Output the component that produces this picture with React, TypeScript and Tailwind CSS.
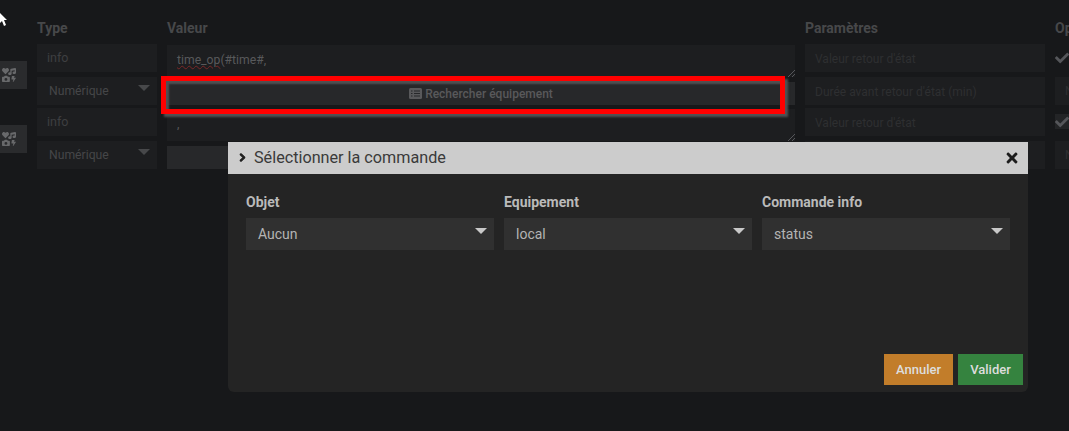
import { FC } from 'react';
import { FaCheck, FaChevronRight, FaIcons, FaTimes } from 'react-icons/fa';

const Caret: FC<{ className: string }> = ({ className }) => (
  <svg className={`absolute ${className}`} width="12" height="6" viewBox="0 0 12 6" fill="currentColor">
    <path d="M0 0h12L6 6z" />
  </svg>
);

const ResizeHandle = () => (
  <svg className="absolute right-0 bottom-0 text-[#55565a]" width="8" height="8" viewBox="0 0 8 8" stroke="currentColor" fill="none">
    <path d="M1 8l7-7M5 8l3-3" />
  </svg>
);

const ListIcon = () => (
  <svg width="13" height="11" viewBox="0 0 13 11">
    <rect width="13" height="11" rx="1.5" fill="#59595b" />
    <path d="M2 3h1.5M5 3h6M2 5.5h1.5M5 5.5h6M2 8h1.5M5 8h6" stroke="#27282a" strokeWidth="1" />
  </svg>
);

const SelectBox: FC<{ label: string }> = ({ label }) => (
  <div className="relative flex h-[28px] items-center bg-[#1d1e20] pt-[1px] pl-[12px] text-[12.2px] text-[#454648]">
    {label}
    <Caret className="top-[8px] right-[7px] text-[#47484a]" />
  </div>
);

const InputBox: FC<{ label: string; faint?: boolean }> = ({ label, faint }) => (
  <div className={`flex h-[28px] items-center bg-[#1d1e20] pt-[1px] pl-[10px] ${faint ? 'text-[12px] text-[#2e2f31]' : 'text-[12.5px] text-[#3e3f41]'}`}>
    {label}
  </div>
);

const IconButton = () => (
  <div className="-ml-[4px] flex h-[28px] w-[31px] items-center bg-[#2a2b2d] pl-[6px] text-[#68696b]">
    <FaIcons size={14} />
  </div>
);

const TableRow: FC<{ value: string; typo?: boolean; withButton?: boolean; checkBg?: boolean }> = ({ value, typo, withButton, checkBg }) => (
  <div className="grid grid-cols-[27px_120px_628px_240px_1fr] gap-x-[10px]">
    <div className="flex items-center">
      <IconButton />
    </div>
    <div className="flex flex-col gap-[5px]">
      <InputBox label="info" />
      <SelectBox label="Numérique" />
    </div>
    <div className="flex flex-col gap-[5px] pt-[1px]">
      <div className="relative h-[32px] bg-[#1d1e20] pt-[6px] pl-[10px] text-[12.2px] text-[#58595b]">
        {typo ? (
          <>
            <span className="underline decoration-[#7a2626] decoration-wavy decoration-1">time_op</span>(#time#,
          </>
        ) : (
          value
        )}
        <ResizeHandle />
      </div>
      {withButton ? (
        <div className="flex h-[23px] items-center justify-center gap-[3px] bg-[#27282a] text-[12px] font-medium text-[#59595b]">
          <ListIcon />
          Rechercher équipement
        </div>
      ) : (
        <div className="h-[23px] bg-[#27282a]" />
      )}
    </div>
    <div className="flex flex-col gap-[5px]">
      <InputBox label="Valeur retour d'état" faint />
      <InputBox label="Durée avant retour d'état (min)" faint />
    </div>
    <div className="flex flex-col gap-[5px]">
      <div className={`flex h-[28px] items-center text-[#55565a] ${checkBg ? 'bg-[linear-gradient(#17181a_6px,#232426_6px,#232426_21px,#17181a_21px)]' : ''}`}>
        <FaCheck size={14} />
      </div>
      <div className="h-[28px] bg-[#1d1e20] pl-[10px] text-[12px] leading-[28px] text-[#2e2f31]">N</div>
    </div>
  </div>
);

const ModalSelect: FC<{ title: string; value: string }> = ({ title, value }) => (
  <div className="flex flex-col">
    <div className="mb-[6px] text-[14px] leading-[20px] font-bold text-[#bababa]">{title}</div>
    <div className="relative flex h-[32px] items-center bg-[#303030] pl-[12px] text-[14px] text-[#b4b4b4]">
      {value}
      <Caret className="top-[10px] right-[7px] text-[#c8c8c8]" />
    </div>
  </div>
);

const App = () => {
  return (
    <div className="relative h-[431px] w-[1069px] overflow-hidden bg-[#17181a] font-['Roboto',sans-serif]">
      <div className="grid grid-cols-[27px_120px_628px_240px_1fr] gap-x-[10px] pt-[20px] pb-[7px] text-[14px] leading-[17px] font-bold text-[#47484a]">
        <div />
        <div>Type</div>
        <div>Valeur</div>
        <div>Paramètres</div>
        <div>Options</div>
      </div>
      <div className="flex flex-col gap-[3px]">
        <TableRow value="" typo withButton />
        <TableRow value="," checkBg />
      </div>

      {/* annotation drawn over the screenshot */}
      <div className="absolute top-[76px] left-[161px] h-[38px] w-[624px] border-[5px] border-[#ff0000] shadow-[3px_3px_2px_#505153,inset_3px_3px_2px_#505153]" />

      <div className="absolute top-[142px] left-[228px] flex h-[250px] w-[800px] flex-col overflow-hidden rounded-b-[6px] bg-[#242424]">
        <div className="flex h-[32px] items-center justify-between bg-[#cccccc] pr-[8px] pl-[10px] text-[#3a3a3a]">
          <div className="flex items-center gap-[7px] text-[16.2px]">
            <FaChevronRight size={9} className="text-[#1c1c1c]" stroke="currentColor" strokeWidth={60} />
            Sélectionner la commande
          </div>
          <FaTimes size={16} className="text-[#1c1c1c]" />
        </div>
        <div className="grid grid-cols-3 gap-x-[10px] pt-[18px] pr-[18px] pl-[18px]">
          <ModalSelect title="Objet" value="Aucun" />
          <ModalSelect title="Equipement" value="local" />
          <ModalSelect title="Commande info" value="status" />
        </div>
        <div className="mt-auto flex justify-end gap-[5px] pr-[5px] pb-[7px]">
          <button className="h-[31px] w-[69px] bg-[#c27d2a] text-[13px] font-medium text-[#dddddd]">Annuler</button>
          <button className="h-[31px] w-[65px] bg-[#35833f] text-[13px] font-medium text-[#dddddd]">Valider</button>
        </div>
      </div>

      {/* mouse pointer caught in the capture */}
      <svg className="absolute top-[13px] left-0" width="8" height="14" viewBox="0 0 8 14">
        <path d="M0 0l7 7H4l2 5-2 1-2-5-2 2z" fill="#ffffff" />
      </svg>
    </div>
  );
};

export default App;
